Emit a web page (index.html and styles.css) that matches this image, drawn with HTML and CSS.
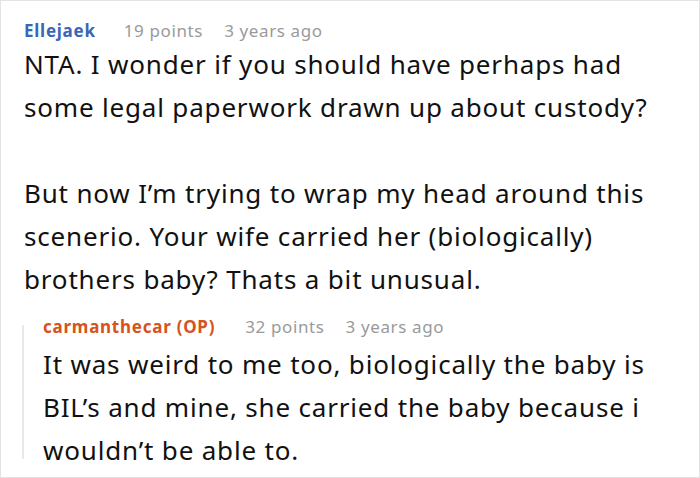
FILE: index.html
```html
<!DOCTYPE html>
<html>
<head>
<meta charset="utf-8">
<link rel="stylesheet" href="styles.css">
</head>
<body>
<div class="card">
  <div class="meta">
    <span class="author">Ellejaek</span>
    <span class="info">19 points</span>
    <span class="info">3 years ago</span>
  </div>
  <div class="text">
    <p>NTA. I wonder if you should have perhaps had some legal paperwork drawn up about custody?</p>
    <p>But now I’m trying to wrap my head around this scenerio. Your wife carried her (biologically) brothers baby? Thats a bit unusual.</p>
  </div>
  <div class="reply">
    <div class="meta">
      <span class="author op">carmanthecar (OP)</span>
      <span class="info">32 points</span>
      <span class="info">3 years ago</span>
    </div>
    <div class="text">
      <p>It was weird to me too, biologically the baby is BIL’s and mine, she carried the baby because i wouldn’t be able to.</p>
    </div>
  </div>
</div>
</body>
</html>
```
FILE: styles.css
```css
html, body {
  margin: 0;
  padding: 0;
  background: #ffffff;
}
.card {
  width: 700px;
  height: 478px;
  box-sizing: border-box;
  border: 1px solid #e3e3e3;
  padding: 18px 14px 0 23px;
  font-family: "Noto Sans", sans-serif;
  color: #111111;
}
.meta {
  display: flex;
  gap: 21px;
  font-size: 17px;
  line-height: 24px;
  letter-spacing: 0.62px;
  color: #9a9a9a;
}
.author {
  font-weight: 700;
  color: #3a66b8;
  margin-right: 7px;
  letter-spacing: 0.75px;
}
.author.op {
  color: #d6531c;
  margin-right: 9px;
}
.text {
  font-size: 26px;
  line-height: 43px;
  letter-spacing: 0.82px;
}
.text p {
  margin: 0 0 43px 0;
}
.text p:last-child {
  margin-bottom: 0;
}
.reply {
  position: relative;
  margin-top: 14px;
  padding-left: 19px;
}
.reply .meta {
  margin-bottom: 4px;
}
.reply::before {
  content: "";
  position: absolute;
  left: -2px;
  top: 10px;
  bottom: 13px;
  width: 2px;
  background: #e8e8e8;
}
```
